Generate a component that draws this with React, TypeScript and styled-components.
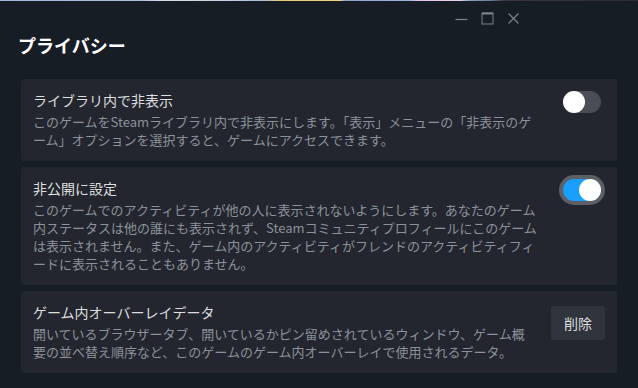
import styled, { createGlobalStyle } from "styled-components"

const GlobalStyle = createGlobalStyle`
    html, body {
        margin: 0;
        padding: 0;
        background: #171d25;
    }
    body {
        font-family: "Noto Sans CJK JP", "Noto Sans", sans-serif;
        -webkit-font-smoothing: antialiased;
    }
`

const Window = styled.div`
    width: 638px;
    height: 388px;
    background: #171d25;
    display: flex;
    flex-direction: column;
    overflow: hidden;
`

const BackdropStrip = styled.div`
    height: 1px;
    background: linear-gradient(90deg,
        #9fb8dc 0px, #a9bfe0 140px, #d8dce4 160px, #c9d2e2 225px, #a6bde0 260px,
        #e8c878 280px, #f2d488 340px, #8ea6cf 345px, #9db5da 410px,
        #e6c6e6 418px, #efd0ec 460px, #8aa0c8 470px, #6d7c98 490px,
        #3a3446 505px, #2c2a38 638px);
`

const TitleBar = styled.div`
    height: 23px;
    display: flex;
    justify-content: flex-end;
    align-items: center;
    padding: 6px 112px 0 0;
`

const WindowButton = styled.div`
    width: 26px;
    height: 23px;
    display: grid;
    place-items: center;
    color: #7c828a;
`

const Heading = styled.h1`
    margin: 0;
    padding: 3px 18px 0;
    height: 24px;
    line-height: 24px;
    font-size: 18px;
    font-weight: 700;
    color: #ffffff;
`

const SettingsList = styled.div`
    display: flex;
    flex-direction: column;
    gap: 6px;
    padding: 22px 21px 0;
`

const Card = styled.div`
    background: #23262e;
    border-radius: 3px;
    padding: 11px 16px 12px 12px;
    display: grid;
    grid-template-columns: 1fr auto;
    column-gap: 12px;
    row-gap: 3px;
`

const CardTitle = styled.div`
    font-size: 14px;
    line-height: 20px;
    color: #dcdedf;
`

const Description = styled.div`
    grid-column: 1;
    font-size: 13px;
    line-height: 18px;
    color: #8b929a;
    white-space: nowrap;
`

const Control = styled.div`
    grid-column: 2;
    grid-row: 1 / span 2;
    align-self: start;
    margin-top: 1px;
`

const Track = styled.div<{ $on: boolean; $focused?: boolean }>`
    width: 38px;
    height: 22px;
    border-radius: 11px;
    background: ${p => (p.$on ? "#1a9fff" : "#4a4d55")};
    display: flex;
    justify-content: ${p => (p.$on ? "flex-end" : "flex-start")};
    box-shadow: ${p => (p.$focused ? "0 0 0 4px #5d5f65" : "none")};
`

const Knob = styled.div`
    width: 22px;
    height: 22px;
    border-radius: 50%;
    background: #ffffff;
`

const DeleteButton = styled.button`
    margin: 3px -4px 0 0;
    width: 54px;
    height: 34px;
    border: none;
    border-radius: 3px;
    background: #2f333c;
    color: #dcdedf;
    font-family: inherit;
    font-size: 14px;
    padding: 0;
`

const Toggle = ({ on, focused }: { on: boolean; focused?: boolean }) => (
    <Track $on={on} $focused={focused}>
        <Knob />
    </Track>
)

const settings = [
    {
        title: "ライブラリ内で非表示",
        lines: [
            "このゲームをSteamライブラリ内で非表示にします。「表示」メニューの「非表示のゲ",
            "ーム」オプションを選択すると、ゲームにアクセスできます。",
        ],
        control: <Toggle on={false} />,
    },
    {
        title: "非公開に設定",
        lines: [
            "このゲームでのアクティビティが他の人に表示されないようにします。あなたのゲーム",
            "内ステータスは他の誰にも表示されず、Steamコミュニティプロフィールにこのゲーム",
            "は表示されません。また、ゲーム内のアクティビティがフレンドのアクティビティフィ",
            "ードに表示されることもありません。",
        ],
        control: <Toggle on focused />,
    },
    {
        title: "ゲーム内オーバーレイデータ",
        lines: [
            "開いているブラウザータブ、開いているかピン留めされているウィンドウ、ゲーム概",
            "要の並べ替え順序など、このゲームのゲーム内オーバーレイで使用されるデータ。",
        ],
        control: <DeleteButton>削除</DeleteButton>,
    },
]

export default function App() {
    return <Window>
        <GlobalStyle />
        <BackdropStrip />
        <TitleBar>
            <WindowButton>
                <svg width="13" height="13" viewBox="0 0 13 13"><path d="M0.5 7.5H12.5" stroke="currentColor" strokeWidth="1.2" /></svg>
            </WindowButton>
            <WindowButton>
                <svg width="13" height="13" viewBox="0 0 13 13"><rect x="1" y="1" width="11" height="11" fill="none" stroke="currentColor" strokeWidth="1" /><path d="M1 1.5H12" stroke="currentColor" strokeWidth="2" /></svg>
            </WindowButton>
            <WindowButton>
                <svg width="13" height="13" viewBox="0 0 13 13"><path d="M1.5 1.5L11.5 11.5M11.5 1.5L1.5 11.5" stroke="currentColor" strokeWidth="1.2" /></svg>
            </WindowButton>
        </TitleBar>
        <Heading>プライバシー</Heading>
        <SettingsList>
            {settings.map(s => <Card key={s.title}>
                <CardTitle>{s.title}</CardTitle>
                <Control>{s.control}</Control>
                <Description>
                    {s.lines.map((l, i) => <div key={i}>{l}</div>)}
                </Description>
            </Card>)}
        </SettingsList>
    </Window>
}
